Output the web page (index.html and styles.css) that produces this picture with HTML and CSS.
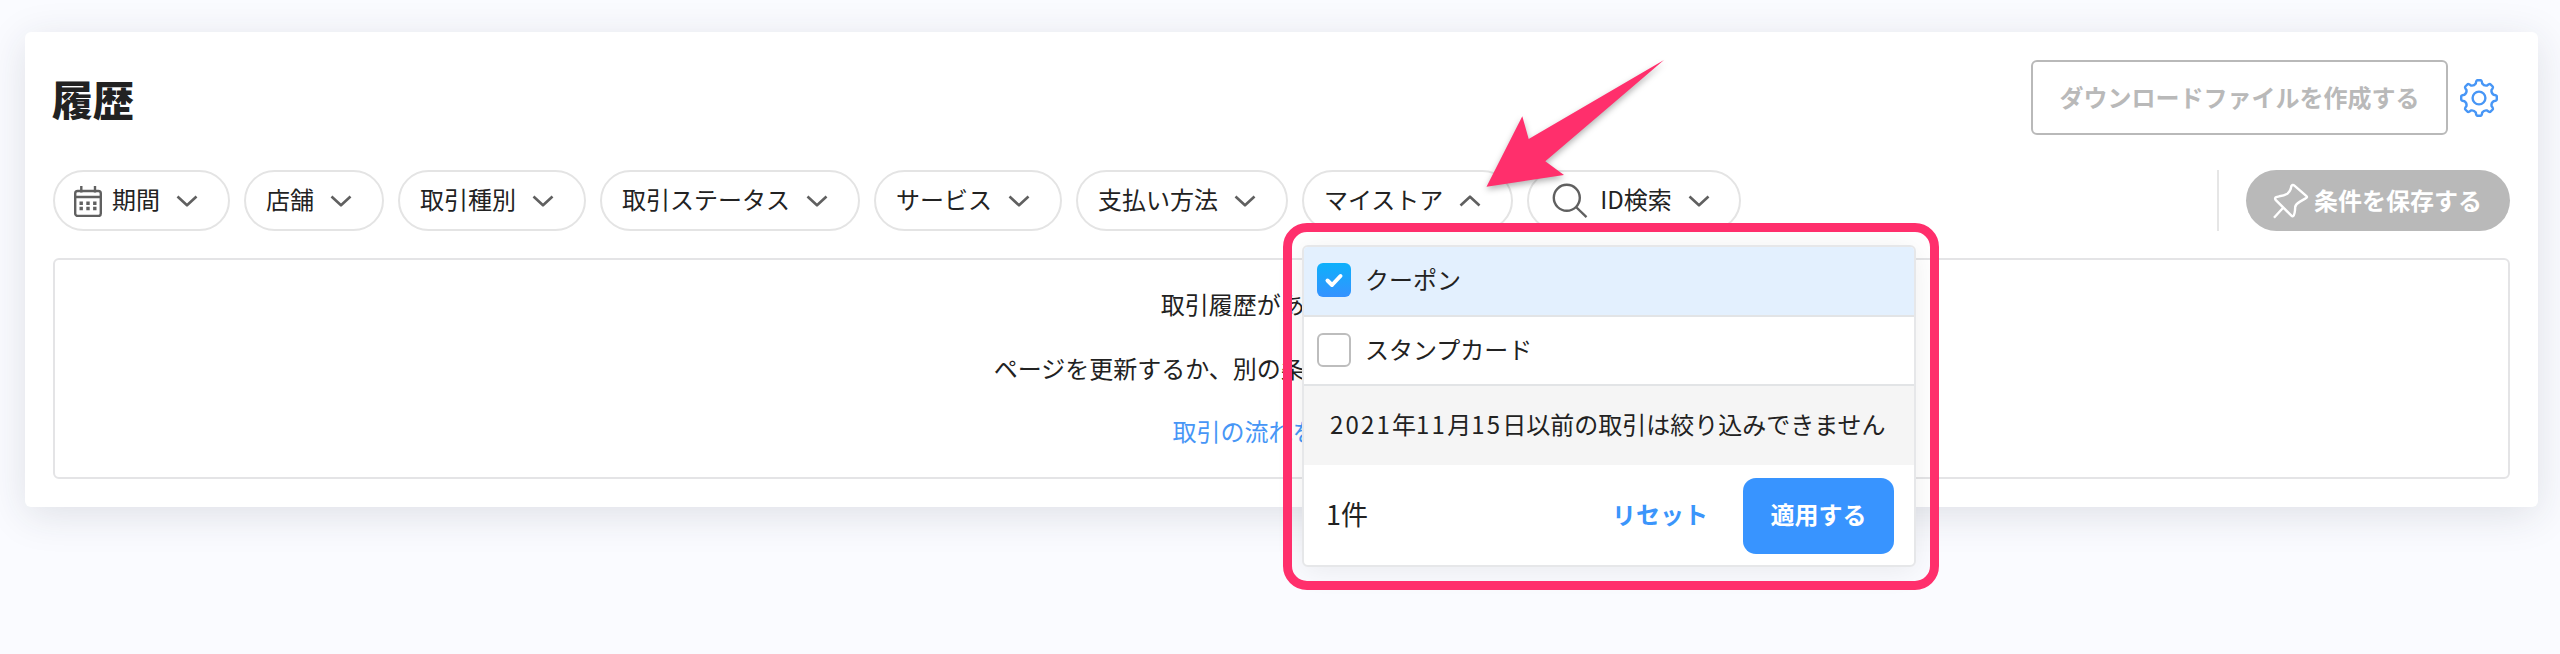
FILE: index.html
```html
<!DOCTYPE html>
<html lang="ja">
<head>
<meta charset="UTF-8" />
<meta name="viewport" content="width=device-width, initial-scale=1" />
<title>履歴</title>
<link rel="stylesheet" href="styles.css">
</head>
<body>

<svg class="sprite" aria-hidden="true">
  <symbol id="down" viewBox="0 0 22 12">
    <path d="M1.5 1.5 L11 10.3 L20.5 1.5" />
  </symbol>
</svg>

<main class="card">
  <header class="card-header">
    <h1>履歴</h1>
    <div class="actions">
      <button class="download" disabled>ダウンロードファイルを作成する</button>
      <svg class="gear" viewBox="-20 -20 40 40">
        <path d="M-3.2 -14.5 Q-2.8 -17.8 -1.5 -17.8 L1.5 -17.8 Q2.8 -17.8 3.2 -14.5 Q5 -12 8 -12.5
          Q10.6 -14.6 11.5 -13.7 L13.7 -11.5 Q14.6 -10.6 12.5 -8 Q12 -5 14.5 -3.2
          Q17.8 -2.8 17.8 -1.5 L17.8 1.5 Q17.8 2.8 14.5 3.2 Q12 5 12.5 8
          Q14.6 10.6 13.7 11.5 L11.5 13.7 Q10.6 14.6 8 12.5 Q5 12 3.2 14.5
          Q2.8 17.8 1.5 17.8 L-1.5 17.8 Q-2.8 17.8 -3.2 14.5 Q-5 12 -8 12.5
          Q-10.6 14.6 -11.5 13.7 L-13.7 11.5 Q-14.6 10.6 -12.5 8 Q-12 5 -14.5 3.2
          Q-17.8 2.8 -17.8 1.5 L-17.8 -1.5 Q-17.8 -2.8 -14.5 -3.2 Q-12 -5 -12.5 -8
          Q-14.6 -10.6 -13.7 -11.5 L-11.5 -13.7 Q-10.6 -14.6 -8 -12.5 Q-5 -12 -3.2 -14.5 Z" />
        <circle r="6.4" />
      </svg>
    </div>
  </header>

  <div class="filters">
    <button class="pill pill-calendar">
      <svg class="calendar" viewBox="0 0 30 32">
        <rect x="2.2" y="6" width="25.6" height="25" rx="2.5" />
        <path d="M2 12 H28 M8.3 1 V7.5 M22 1 V7.5" />
        <path class="dots" d="M6.5 18.2 h3.4 M13.3 18.2 h3.4 M20.1 18.2 h3.4 M6.5 23.5 h3.4 M13.3 23.5 h3.4 M20.1 23.5 h3.4" />
      </svg>
      期間<svg class="chevron"><use href="#down" /></svg>
    </button>
    <button class="pill">店舗<svg class="chevron"><use href="#down" /></svg></button>
    <button class="pill">取引種別<svg class="chevron"><use href="#down" /></svg></button>
    <button class="pill">取引ステータス<svg class="chevron"><use href="#down" /></svg></button>
    <button class="pill">サービス<svg class="chevron"><use href="#down" /></svg></button>
    <button class="pill">支払い方法<svg class="chevron"><use href="#down" /></svg></button>
    <div class="pill-wrap">
      <button class="pill">マイストア<svg class="chevron up"><use href="#down" /></svg></button>
      <div class="dropdown">
        <label class="option checked">
          <span class="box">
            <svg viewBox="0 0 34 34"><path d="M10.5 17.5 L15 22 L23.5 13" /></svg>
          </span>
          <span class="option-name">クーポン</span>
        </label>
        <label class="option">
          <span class="box"></span>
          <span class="option-name">スタンプカード</span>
        </label>
        <p class="note"><span class="num">2021</span>年<span class="num">11</span>月<span class="num">15</span>日以前の取引は絞り込みできません</p>
        <div class="dropdown-footer">
          <span class="count">1件</span>
          <button class="reset">リセット</button>
          <button class="apply">適用する</button>
        </div>
      </div>
    </div>
    <button class="pill">
      <svg class="search" viewBox="0 0 36 36">
        <circle cx="14.8" cy="14.8" r="13" />
        <path d="M24 24 L34.5 34.2" />
      </svg>
      ID検索<svg class="chevron"><use href="#down" /></svg>
    </button>
    <div class="save-area">
      <button class="save" disabled>
        <svg class="pin" viewBox="0 0 36 36">
          <path d="M1 34.7 L9.7 25.3 M2.6 16.8 Q1.4 15 3.2 14.2 L6.3 13.3 Q11 12.6 14.3 10.7 Q16.6 9 17.7 6 L18.3 3.2 Q19.6 1 21.4 2.6 L33.2 12.8 Q35 14.4 32.6 15.4 L27 18.6 Q22.6 21 22.2 24 L22 27.3 Q21.8 30 20.8 32.4 Q19.8 34 18.4 32.6 Z" />
        </svg>
        条件を保存する
      </button>
    </div>
  </div>

  <section class="empty">
    <p>取引履歴がありません</p>
    <p>ページを更新するか、別の条件で検索してください。</p>
    <p><a href="#">取引の流れを調べる</a></p>
  </section>
</main>

<div class="highlight"></div>
<svg class="arrow" viewBox="0 0 190 140">
  <path d="M6.5 136.7 L42.3 66.3 L48.7 89 L184 10 L65.3 111.3 L84 125 Z" />
</svg>

</body>
</html>
```
FILE: styles.css
```css
* {
  box-sizing: border-box;
}
body {
  margin: 0;
  padding: 32px 22px 0 25px;
  height: 654px;
  overflow: hidden;
  background: #fafbff;
  color: #222;
  font-family: "Noto Sans CJK JP", sans-serif;
  font-size: 24px;
}
button {
  font: inherit;
  color: inherit;
  border: none;
  background: none;
  padding: 0;
  white-space: nowrap;
}
svg {
  display: block;
  flex: none;
  fill: none;
  stroke: #606060;
  stroke-width: 2.4;
  stroke-linejoin: round;
}
.sprite {
  position: absolute;
  width: 0;
  height: 0;
}
.card {
  height: 475px;
  padding: 28px 28px 0;
  border-radius: 6px;
  background: #fff;
  box-shadow: 0 8px 40px rgba(40, 45, 60, 0.13);
}
.card-header {
  display: flex;
  justify-content: space-between;
  height: 75px;
}
h1 {
  margin: 0 0 0 -1px;
  font-size: 41px;
  font-weight: 900;
  line-height: 76px;
}
.actions {
  display: flex;
  align-items: center;
  gap: 11px;
  padding-right: 11px;
}
.download {
  width: 417px;
  height: 75px;
  padding-bottom: 3px;
  border: 2px solid #b9b9b9;
  border-radius: 6px;
  color: #b9b9b9;
  font-weight: 700;
}
.gear {
  width: 40px;
  height: 40px;
  stroke: #4796f6;
}

/* filters */
.filters {
  display: flex;
  gap: 14.5px;
  margin-top: 35px;
  height: 61px;
}
.pill {
  display: flex;
  align-items: center;
  height: 61px;
  padding: 0 29.5px 4px 20px;
  border: 2px solid #e4e4e4;
  border-radius: 31px;
}
.pill-calendar {
  padding-left: 18px;
}
.chevron {
  width: 22px;
  height: 12px;
  margin: 4px 0 0 16px;
  stroke-width: 2.6;
}
.chevron.up {
  transform: rotate(180deg);
}
.calendar {
  width: 30px;
  height: 32px;
  margin: 4px 9px 0 0;
}
.calendar .dots {
  stroke-width: 3.4;
}
.search {
  width: 36px;
  height: 36px;
  margin: 4px 12px 0 3px;
}
.pill-wrap {
  position: relative;
}
.save-area {
  display: flex;
  margin-left: auto;
  padding-left: 27px;
  border-left: 2px solid #e6e6e6;
}
.save {
  display: flex;
  align-items: center;
  gap: 5px;
  width: 264px;
  padding: 0 0 3px 27px;
  border-radius: 31px;
  background: #b9b9b9;
  color: #fff;
  font-weight: 700;
}
.pin {
  width: 36px;
  height: 36px;
  margin-top: 3px;
  stroke: #fff;
}

/* dropdown */
.dropdown {
  position: absolute;
  z-index: 1;
  top: 75px;
  left: 0;
  width: 614px;
  height: 322px;
  border: 2px solid #e6e7e9;
  border-radius: 6px;
  background: #fff;
  box-shadow: 0 4px 30px rgba(0, 0, 0, 0.07);
  overflow: hidden;
}
.option {
  display: flex;
  align-items: center;
  gap: 14px;
  height: 69.5px;
  padding: 0 0 1px 13px;
  border-bottom: 2px solid #e2e4e6;
}
.option.checked {
  background: #e3f0fe;
}
.option-name {
  padding-bottom: 3px;
}
.box {
  width: 34px;
  height: 34px;
  border: 2px solid #bdbdbd;
  border-radius: 6px;
  background: #fff;
}
.checked .box {
  border: none;
  background: linear-gradient(#0db0fb, #3592ff);
}
.box svg {
  stroke: #fff;
  stroke-width: 4;
  stroke-linecap: round;
}
.note {
  margin: 0;
  padding-left: 26px;
  height: 79px;
  line-height: 76px;
  background: #f5f5f5;
  white-space: nowrap;
}
.num {
  letter-spacing: 2.2px;
}
.dropdown-footer {
  display: flex;
  align-items: center;
  height: 101px;
  padding: 0 20px 0 22px;
}
.count {
  flex: 1;
  padding-bottom: 4px;
  font-size: 27px;
}
.reset {
  margin-right: 35px;
  padding-bottom: 4px;
  color: #3b95fb;
  font-weight: 700;
}
.apply {
  width: 151px;
  height: 76px;
  padding-bottom: 4px;
  border-radius: 13px;
  background: #3894ff;
  color: #fff;
  font-weight: 700;
}

/* result area */
.empty {
  height: 221px;
  margin-top: 27px;
  padding: 12px 2px 0 0;
  border: 2px solid #e4e4e6;
  border-radius: 6px;
  text-align: center;
}
.empty p {
  margin: 0;
  line-height: 63.5px;
}
.empty a {
  color: #4796f6;
  text-decoration: none;
}

/* annotation */
.highlight {
  position: absolute;
  z-index: 2;
  top: 223px;
  left: 1283px;
  width: 656px;
  height: 367px;
  border: 9px solid #ff2f6c;
  border-radius: 24px;
}
.arrow {
  position: absolute;
  z-index: 2;
  top: 50px;
  left: 1480px;
  width: 190px;
  height: 140px;
  overflow: visible;
  fill: #ff2f6c;
  stroke: none;
  filter: drop-shadow(0 3px 3px rgba(0, 0, 0, 0.3));
}
```
